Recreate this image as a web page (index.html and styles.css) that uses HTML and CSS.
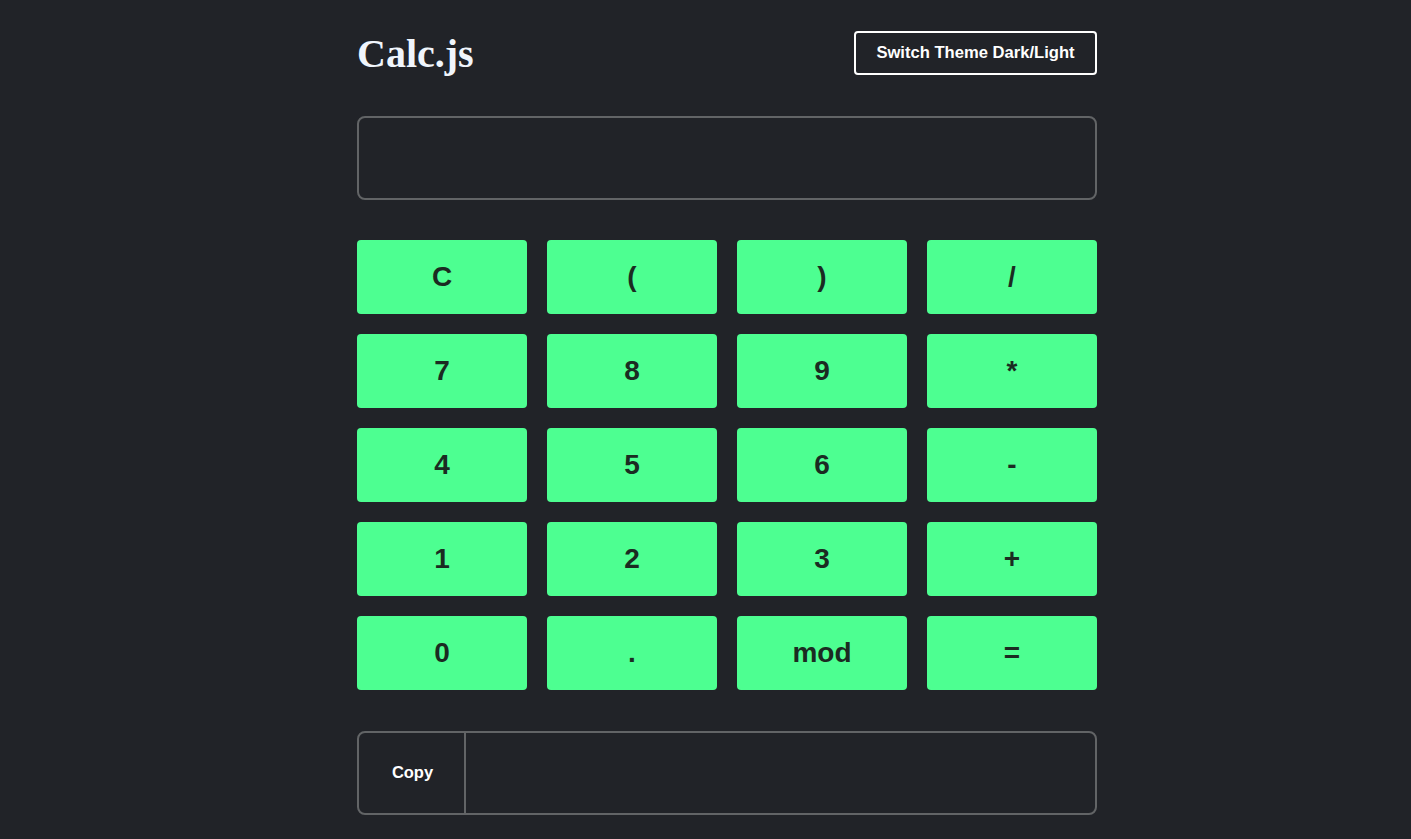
FILE: index.html
```html
<!DOCTYPE html>
<html>
<head>
<meta charset="utf-8">
<title>Calc.js</title>
<link rel="stylesheet" href="styles.css">
</head>
<body>
<div class="app">
  <header class="header">
    <h1 class="title">Calc.js</h1>
    <button class="theme-btn">Switch Theme Dark/Light</button>
  </header>
  <div class="display"></div>
  <div class="keys">
    <button class="key">C</button>
    <button class="key">(</button>
    <button class="key">)</button>
    <button class="key">/</button>
    <button class="key">7</button>
    <button class="key">8</button>
    <button class="key">9</button>
    <button class="key">*</button>
    <button class="key">4</button>
    <button class="key">5</button>
    <button class="key">6</button>
    <button class="key">-</button>
    <button class="key">1</button>
    <button class="key">2</button>
    <button class="key">3</button>
    <button class="key">+</button>
    <button class="key">0</button>
    <button class="key">.</button>
    <button class="key">mod</button>
    <button class="key">=</button>
  </div>
  <div class="result">
    <button class="copy-btn">Copy</button>
    <div class="result-field"></div>
  </div>
</div>
</body>
</html>
```
FILE: styles.css
```css
html, body {
  margin: 0;
  padding: 0;
  background: #212328;
}
body {
  font-family: "Liberation Sans", Arial, sans-serif;
}
.app {
  width: 740px;
  margin-left: 357px;
  padding-top: 31px;
}
.header {
  display: flex;
  justify-content: space-between;
  align-items: center;
  height: 44px;
}
.title {
  margin: 0;
  font-family: "Liberation Serif", "Times New Roman", serif;
  font-weight: bold;
  font-size: 40px;
  color: #f0f5fc;
  line-height: 44px;
  position: relative;
  top: 1px;
}
.theme-btn {
  box-sizing: border-box;
  width: 243px;
  height: 44px;
  background: transparent;
  border: 2px solid #ffffff;
  border-radius: 4px;
  color: #ffffff;
  font-family: "Liberation Sans", Arial, sans-serif;
  font-weight: bold;
  font-size: 16.6px;
  padding: 0;
}
.display {
  box-sizing: border-box;
  margin-top: 41px;
  height: 84px;
  border: 2px solid #626466;
  border-radius: 8px;
}
.keys {
  margin-top: 40px;
  display: grid;
  grid-template-columns: repeat(4, 170px);
  grid-auto-rows: 74px;
  gap: 20px;
}
.key {
  background: #4dff91;
  border: none;
  border-radius: 4px;
  color: #1b2b22;
  font-family: "Liberation Sans", Arial, sans-serif;
  font-weight: bold;
  font-size: 28px;
  padding: 0;
}
.result {
  box-sizing: border-box;
  margin-top: 41px;
  height: 84px;
  display: flex;
  border: 2px solid #626466;
  border-radius: 8px;
}
.copy-btn {
  box-sizing: border-box;
  width: 107px;
  background: transparent;
  border: none;
  border-right: 2px solid #626466;
  color: #ffffff;
  font-family: "Liberation Sans", Arial, sans-serif;
  font-weight: bold;
  font-size: 16.5px;
  padding: 0 0 2px 2px;
}
.result-field {
  flex: 1;
}
```
